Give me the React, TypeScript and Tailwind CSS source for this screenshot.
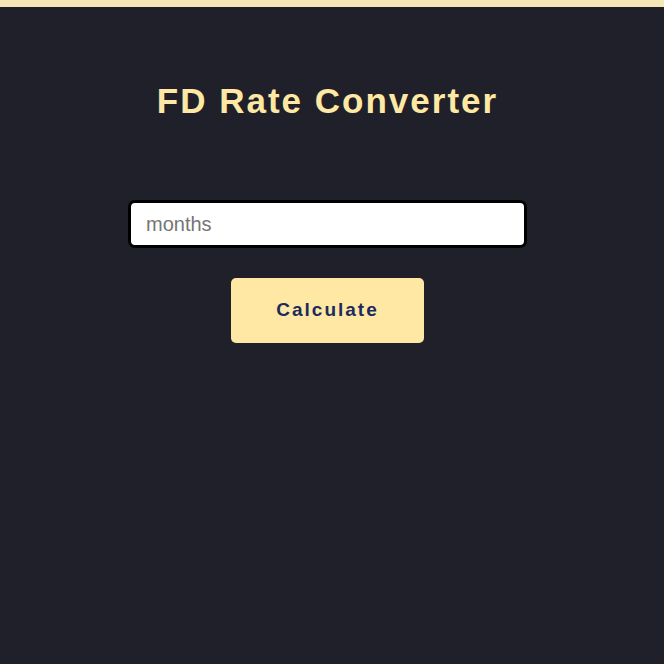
import React, { useState } from "react";

const App = () => {
  const [months, setMonths] = useState("");

  return (
    <div
      className="min-h-[664px] w-full bg-[#20202a]"
      style={{ fontFamily: '"Liberation Sans", Arial, sans-serif' }}
    >
      <div className="h-[7px] w-full bg-[#f6e7b7]" />

      <div className="flex flex-col items-center pr-[9px]">
        <h1 className="mt-[74px] text-[35px] leading-[40px] font-bold tracking-[2px] text-[#ffe8a3]">
          FD Rate Converter
        </h1>

        <input
          type="text"
          placeholder="months"
          value={months}
          onChange={(e) => setMonths(e.target.value)}
          className="mt-[79px] h-[48px] w-[399px] rounded-[7px] border-[3px] border-black bg-white px-[15px] text-[20px] text-black outline-none placeholder:text-[#757575]"
        />

        {/* calculate button */}
        <button className="mt-[30px] h-[65px] w-[193px] rounded-[5px] bg-[#ffe8a3] text-[19px] font-bold tracking-[2px] text-[#1b2a5e]">
          Calculate
        </button>
      </div>
    </div>
  );
};

export default App;
